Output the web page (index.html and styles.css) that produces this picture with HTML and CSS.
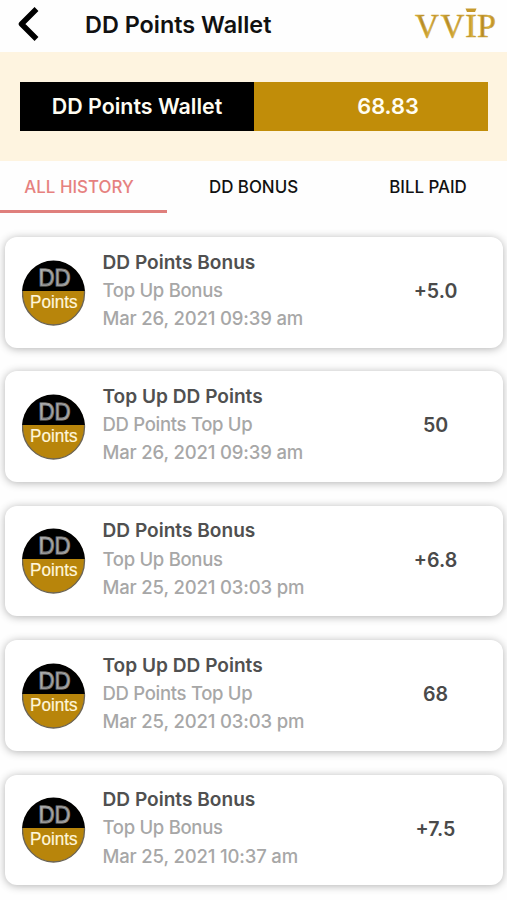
FILE: index.html
```html
<!DOCTYPE html>
<html lang="en">
<head>
<meta charset="utf-8">
<title>DD Points Wallet</title>
<link rel="stylesheet" href="styles.css">
</head>
<body>
<svg class="defs" aria-hidden="true">
  <defs>
    <linearGradient id="silver" x1="0" y1="0" x2="1" y2="1">
      <stop offset="0" stop-color="#aaa"/><stop offset=".5" stop-color="#777"/><stop offset="1" stop-color="#999"/>
    </linearGradient>
    <clipPath id="coin-top"><rect width="64" height="31"/></clipPath>
    <clipPath id="coin-bottom"><rect y="31" width="64" height="35"/></clipPath>
    <symbol id="coin" viewBox="0 0 64 66">
      <ellipse cx="31.5" cy="33" rx="31" ry="32" fill="#b8850b"/>
      <ellipse cx="31.5" cy="33" rx="31" ry="32" fill="none" stroke="#6b6455" stroke-width="1.3" clip-path="url(#coin-bottom)"/>
      <ellipse cx="31.5" cy="33" rx="31.5" ry="32.5" fill="#000" clip-path="url(#coin-top)"/>
      <text x="16.5" y="26" class="coin-dd" textLength="32" lengthAdjust="spacingAndGlyphs">DD</text>
      <text x="8" y="48" class="coin-points" textLength="47.5" lengthAdjust="spacingAndGlyphs">Points</text>
    </symbol>
  </defs>
</svg>
<header class="topbar">
  <svg class="back" viewBox="0 0 24 38"><path d="M19.5 4L4.5 19L19.5 34" fill="none" stroke="#000" stroke-width="5.5" stroke-linejoin="round"/></svg>
  <h1>DD Points Wallet</h1>
  <svg class="logo" viewBox="0 0 86 46">
    <defs><linearGradient id="gold" x1="0" y1="0" x2="1" y2="0">
      <stop offset="0" stop-color="#dfb73c"/><stop offset=".3" stop-color="#b58a25"/><stop offset=".6" stop-color="#dcb63f"/><stop offset=".8" stop-color="#c0922a"/><stop offset="1" stop-color="#dfb846"/>
    </linearGradient></defs>
    <g class="logo-text" fill="url(#gold)" stroke="#cda43a">
      <text x="3" y="36.5" textLength="24" lengthAdjust="spacingAndGlyphs">V</text>
      <text x="28.5" y="36.5" textLength="24" lengthAdjust="spacingAndGlyphs">V</text>
      <text x="53" y="36.5" textLength="12" lengthAdjust="spacingAndGlyphs">I</text>
      <text x="65" y="36.5" textLength="19" lengthAdjust="spacingAndGlyphs">P</text>
    </g>
    <path d="M53.5 8.5H64.5L63 12H55Z" fill="#c69a2e"/>
  </svg>
</header>
<section class="balance">
  <div class="balance-bar">
    <div class="balance-label"><span>DD Points Wallet</span></div>
    <div class="balance-value">68.83</div>
  </div>
</section>
<nav class="tabs">
  <div class="tab active"><span>ALL HISTORY</span></div>
  <div class="tab bonus"><span>DD BONUS</span></div>
  <div class="tab paid"><span>BILL PAID</span></div>
</nav>
<main class="list">
  <article class="card"><svg class="coin"><use href="#coin"/></svg><div class="info"><h2>DD Points Bonus</h2><p>Top Up Bonus</p><p class="date">Mar 26, 2021 09:39 am</p></div><div class="amount">+5.0</div></article>
  <article class="card"><svg class="coin"><use href="#coin"/></svg><div class="info"><h2>Top Up DD Points</h2><p>DD Points Top Up</p><p class="date">Mar 26, 2021 09:39 am</p></div><div class="amount">50</div></article>
  <article class="card"><svg class="coin"><use href="#coin"/></svg><div class="info"><h2>DD Points Bonus</h2><p>Top Up Bonus</p><p class="date">Mar 25, 2021 03:03 pm</p></div><div class="amount">+6.8</div></article>
  <article class="card"><svg class="coin"><use href="#coin"/></svg><div class="info"><h2>Top Up DD Points</h2><p>DD Points Top Up</p><p class="date">Mar 25, 2021 03:03 pm</p></div><div class="amount">68</div></article>
  <article class="card"><svg class="coin"><use href="#coin"/></svg><div class="info"><h2>DD Points Bonus</h2><p>Top Up Bonus</p><p class="date">Mar 25, 2021 10:37 am</p></div><div class="amount">+7.5</div></article>
</main>
</body>
</html>
```
FILE: styles.css
```css
* { box-sizing: border-box; }
body { margin: 0; height: 900px; overflow: hidden; background: #fefefe; font-family: Inter, "Liberation Sans", sans-serif; color: #111; }
h1, h2, p { margin: 0; white-space: nowrap; }
.defs { display: block; width: 0; height: 0; }
.topbar { display: flex; height: 52px; }
.back { width: 24px; height: 38px; margin: 5px 0 0 17px; }
h1 { flex: 1; margin-left: 44px; font-size: 23.4px; line-height: 50px; font-weight: 560; }
.logo { width: 86px; height: 46px; margin: 0 9px 0 0; }
.logo-text { font-family: "Liberation Serif", serif; font-size: 34.5px; stroke-width: .5px; }
.balance { height: 109px; padding: 30px 19px 0 20px; background: #fef4e0; }
.balance-bar { display: grid; grid-template-columns: 1fr 1fr; height: 49px; line-height: 49px; font-size: 21.4px; font-weight: 560; color: #fffdf2; white-space: nowrap; }
.balance-label { background: #000; text-align: center; }
.balance-value { background: #c18d09; padding-left: 34px; text-align: center; font-size: 21.8px; }
.tabs { display: grid; grid-template-columns: 167px 173px 167px; height: 52px; font-size: 16.9px; font-weight: 500; line-height: 52px; text-align: center; white-space: nowrap; }
.tab { height: 52px; }
.tab.active { color: #e6817f; border-bottom: 3px solid #df7f7c; font-weight: 450; padding-right: 9px; }
.tab.paid { padding-left: 9px; }
.list { display: grid; gap: 23.9px; padding: 24px 4px 0 5px; }
.card { display: flex; height: 110.5px; border-radius: 12px; background: #fff; box-shadow: 0 1px 9px rgba(0, 0, 0, .3); }
.coin { width: 64px; height: 66px; margin: 22.5px 0 0 16.5px; flex: none; }
.coin-dd { font: 23.5px "Liberation Sans", sans-serif; fill: #bbb; stroke: url(#silver); stroke-width: 1.2px; }
.coin-points { font: 18px "Liberation Sans", sans-serif; fill: #fff6dc; stroke: #fff6dc; stroke-width: .2px; }
.info { flex: 1; padding: 10.6px 0 0 17px; color: #a7a7a7; font-size: 18.5px; font-weight: 450; letter-spacing: -.3px; line-height: 28.2px; }
h2 { font-size: 19.1px; line-height: 28.2px; font-weight: 600; letter-spacing: 0; color: #505050; }
.info .date { letter-spacing: -.16px; }
.amount { width: 135px; line-height: 108px; text-align: center; font-size: 19.6px; font-weight: 570; color: #4a4a4a; }
```
